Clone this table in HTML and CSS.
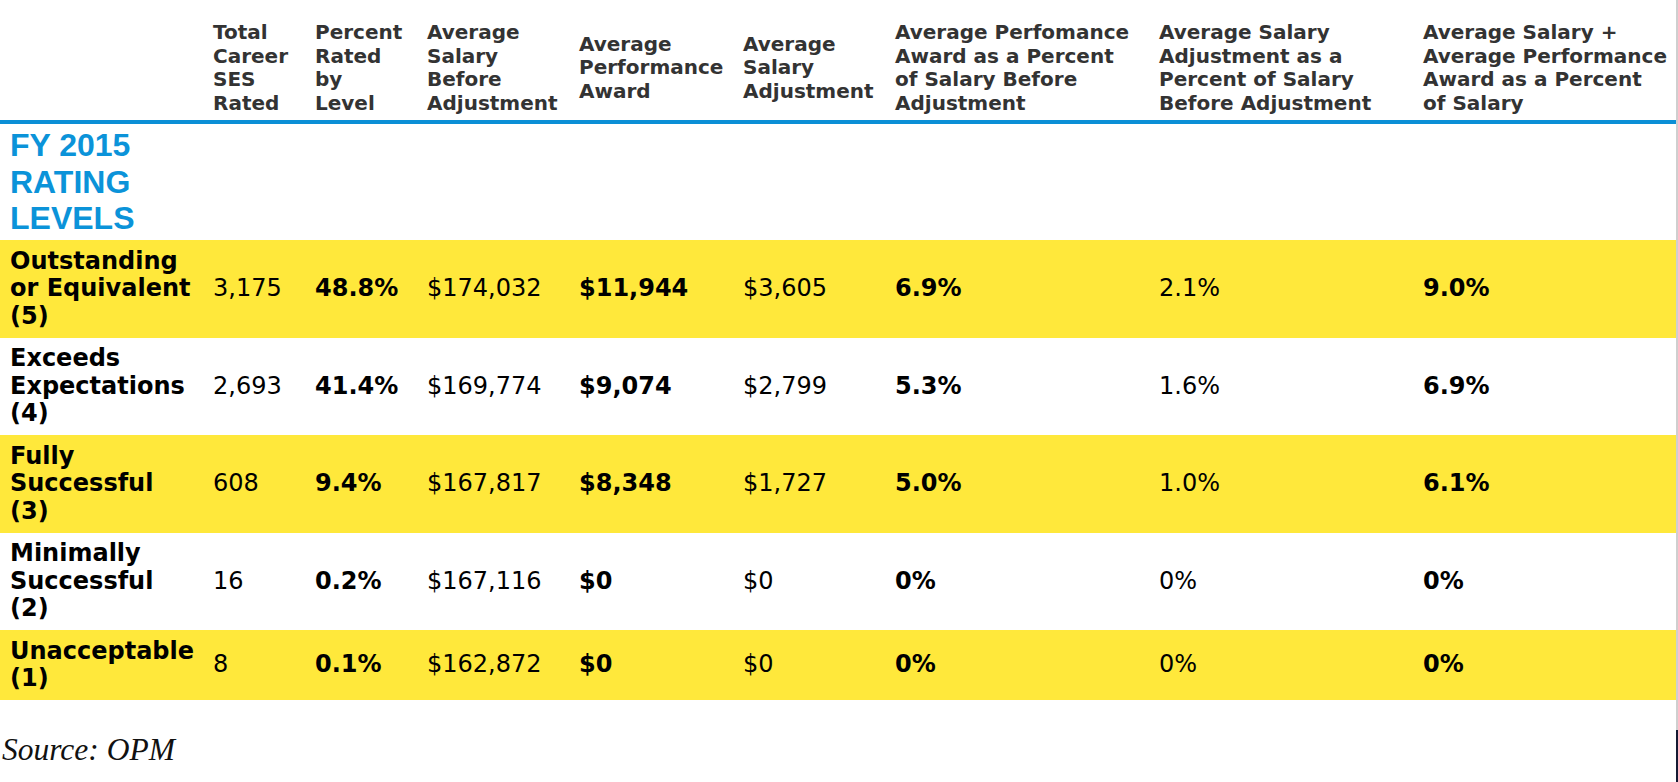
FILE: index.html
```html
<!DOCTYPE html>
<html lang="en">
<head>
<meta charset="utf-8">
<title>FY 2015 SES Rating Levels</title>
<link rel="stylesheet" href="styles.css">
</head>
<body>
<div class="page">
  <div class="content">
    <table class="ratings">
      <colgroup>
        <col class="c-label">
        <col class="c1">
        <col class="c2">
        <col class="c3">
        <col class="c4">
        <col class="c5">
        <col class="c6">
        <col class="c7">
        <col class="c8">
      </colgroup>
      <thead>
        <tr>
          <th class="first"></th>
          <th>Total<br>Career<br>SES<br>Rated</th>
          <th>Percent<br>Rated<br>by<br>Level</th>
          <th>Average<br>Salary<br>Before<br>Adjustment</th>
          <th>Average<br>Performance<br>Award</th>
          <th>Average<br>Salary<br>Adjustment</th>
          <th>Average Perfomance<br>Award as a Percent<br>of Salary Before<br>Adjustment</th>
          <th>Average Salary<br>Adjustment as a<br>Percent of Salary<br>Before Adjustment</th>
          <th>Average Salary +<br>Average Performance<br>Award as a Percent<br>of Salary</th>
        </tr>
      </thead>
      <tbody>
        <tr class="section-row">
          <td class="section">FY 2015<br>RATING<br>LEVELS</td>
          <td></td><td></td><td></td><td></td><td></td><td></td><td></td><td></td>
        </tr>
        <tr class="hl">
          <td class="label">Outstanding<br>or Equivalent<br>(5)</td>
          <td>3,175</td>
          <td class="b">48.8%</td>
          <td>$174,032</td>
          <td class="b">$11,944</td>
          <td>$3,605</td>
          <td class="b">6.9%</td>
          <td>2.1%</td>
          <td class="b">9.0%</td>
        </tr>
        <tr>
          <td class="label">Exceeds<br>Expectations<br>(4)</td>
          <td>2,693</td>
          <td class="b">41.4%</td>
          <td>$169,774</td>
          <td class="b">$9,074</td>
          <td>$2,799</td>
          <td class="b">5.3%</td>
          <td>1.6%</td>
          <td class="b">6.9%</td>
        </tr>
        <tr class="hl">
          <td class="label">Fully<br>Successful<br>(3)</td>
          <td>608</td>
          <td class="b">9.4%</td>
          <td>$167,817</td>
          <td class="b">$8,348</td>
          <td>$1,727</td>
          <td class="b">5.0%</td>
          <td>1.0%</td>
          <td class="b">6.1%</td>
        </tr>
        <tr>
          <td class="label">Minimally<br>Successful<br>(2)</td>
          <td>16</td>
          <td class="b">0.2%</td>
          <td>$167,116</td>
          <td class="b">$0</td>
          <td>$0</td>
          <td class="b">0%</td>
          <td>0%</td>
          <td class="b">0%</td>
        </tr>
        <tr class="hl">
          <td class="label">Unacceptable<br>(1)</td>
          <td>8</td>
          <td class="b">0.1%</td>
          <td>$162,872</td>
          <td class="b">$0</td>
          <td>$0</td>
          <td class="b">0%</td>
          <td>0%</td>
          <td class="b">0%</td>
        </tr>
      </tbody>
    </table>
    <p class="source">Source: OPM</p>
  </div>
  <div class="edge"><div class="edge-dark"></div></div>
</div>
</body>
</html>
```

FILE: styles.css
```css
html, body {
  margin: 0;
  padding: 0;
  background: #ffffff;
}

.page {
  display: flex;
  width: 1678px;
  height: 782px;
  overflow: hidden;
}

.content {
  width: 1676px;
  padding-top: 16px;
}

.edge {
  width: 2px;
  background: #cfcfcf;
  display: flex;
  flex-direction: column;
  justify-content: flex-end;
}

.edge-dark {
  height: 52px;
  background: #151a33;
}

.ratings {
  width: 1676px;
  table-layout: fixed;
  border-collapse: separate;
  border-spacing: 0;
}

.c-label { width: 213px; }
.c1 { width: 102px; }
.c2 { width: 112px; }
.c3 { width: 152px; }
.c4 { width: 164px; }
.c5 { width: 152px; }
.c6 { width: 264px; }
.c7 { width: 264px; }
.c8 { width: 253px; }

.ratings th {
  font-family: "DejaVu Sans", Verdana, sans-serif;
  font-weight: bold;
  font-size: 20px;
  line-height: 23.5px;
  color: #333333;
  text-align: left;
  vertical-align: middle;
  white-space: nowrap;
  padding: 5px 0;
  border-bottom: 4px solid #0b8fd6;
}

.ratings th.first {
  padding-left: 10px;
}

.ratings td {
  font-family: "DejaVu Sans", Verdana, sans-serif;
  font-size: 24px;
  line-height: 27.5px;
  color: #000000;
  text-align: left;
  vertical-align: middle;
  white-space: nowrap;
  padding: 7.5px 0;
}

.ratings td.label {
  font-weight: bold;
  padding-left: 10px;
}

.ratings td.b {
  font-weight: bold;
}

.ratings tr.hl td {
  background: #ffe83b;
}

.ratings td.section {
  font-family: "Liberation Sans", Arial, sans-serif;
  font-weight: bold;
  font-size: 32px;
  line-height: 36.5px;
  color: #0b93d9;
  padding: 3px 0 3.5px 10px;
}

.source {
  margin: 32px 0 0 2px;
  font-family: "Liberation Serif", "Times New Roman", serif;
  font-style: italic;
  font-size: 31.5px;
  line-height: normal;
  color: #111111;
}
```
